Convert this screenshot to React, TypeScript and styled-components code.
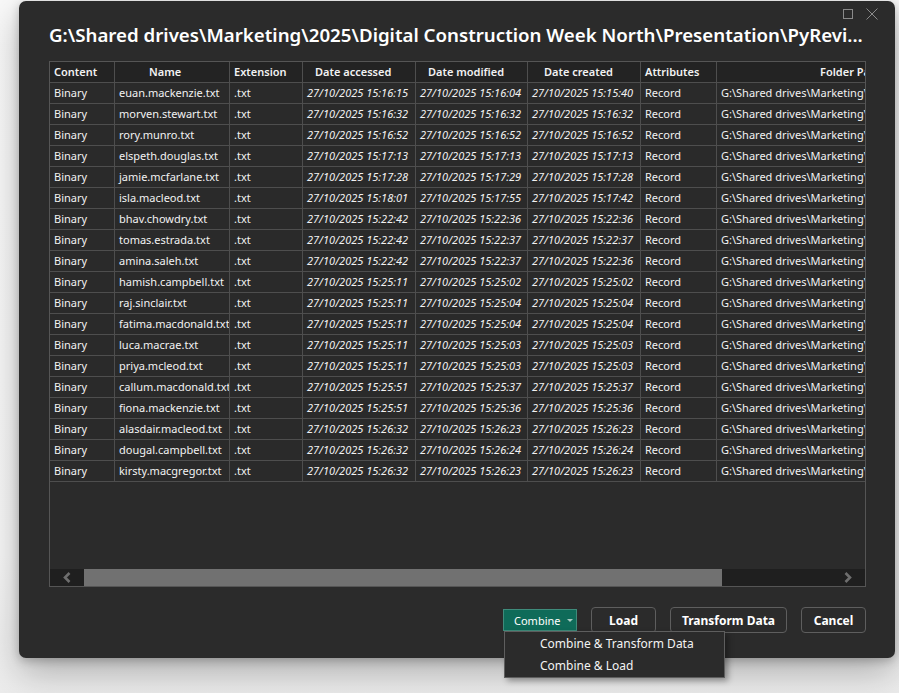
import styled, { createGlobalStyle } from "styled-components";

const GlobalStyle = createGlobalStyle`
  html, body {
    margin: 0;
    padding: 0;
    background: #f9f9f9;
    font-family: "Noto Sans", "Open Sans", sans-serif;
  }
`;

const Page = styled.div`
  width: 899px;
  height: 693px;
  padding: 1px 0 0 19px;
  box-sizing: border-box;
  overflow: hidden;
  background: linear-gradient(to bottom, #f9f9f9 0%, #f6f6f6 80%, #ececec 100%);
`;

const Dialog = styled.div`
  width: 876px;
  height: 657px;
  box-sizing: border-box;
  padding: 0 29px 25px 30px;
  background: #2b2b2b;
  border-radius: 7px;
  display: flex;
  flex-direction: column;
  box-shadow: 0 14px 36px rgba(0, 0, 0, 0.28), 0 3px 10px rgba(0, 0, 0, 0.22);
  color: #f3f3f3;
`;

const TopBar = styled.div`
  height: 20px;
  box-sizing: border-box;
  padding-top: 7px;
  margin-right: -12px;
  display: flex;
  justify-content: flex-end;
  gap: 12px;
`;

const WinButton = styled.span`
  width: 12px;
  height: 12px;
  display: flex;
  align-items: center;
  justify-content: center;
`;

const Title = styled.h1`
  margin: 0 0 12px;
  height: 28px;
  font-size: 18.7px;
  line-height: 28px;
  font-weight: 600;
  color: #ffffff;
  white-space: nowrap;
  overflow: hidden;
`;

const TableBox = styled.div`
  height: 526px;
  border: 1px solid #555555;
  box-sizing: border-box;
  display: flex;
  flex-direction: column;
  overflow: hidden;
`;

const GridArea = styled.div`
  flex: 1;
  overflow: hidden;
`;

const Row = styled.div<{ $head?: boolean }>`
  display: grid;
  grid-template-columns: 65px 115px 73px 113px 112px 113px 76px 320px;
  height: 21px;
  box-sizing: border-box;
  border-bottom: 1px solid #4e4e4e;
  background: ${(p) => (p.$head ? "#232323" : "#2a2a2a")};
`;

const Cell = styled.div<{ $italic?: boolean; $pad?: number; $bold?: boolean }>`
  box-sizing: border-box;
  border-right: 1px solid #4e4e4e;
  padding-left: ${(p) => p.$pad ?? 4}px;
  font-size: 11px;
  line-height: 20px;
  white-space: nowrap;
  overflow: hidden;
  font-style: ${(p) => (p.$italic ? "italic" : "normal")};
  font-weight: ${(p) => (p.$bold ? 600 : 400)};
  color: #f2f2f2;
`;

const ScrollBar = styled.div`
  height: 17px;
  display: flex;
  background: #1f1f1f;
`;

const ScrollButton = styled.div`
  width: 34px;
  display: flex;
  align-items: center;
  justify-content: center;
`;

const Track = styled.div`
  flex: 1;
  display: flex;
`;

const Thumb = styled.div`
  width: 638px;
  background: #717171;
`;

const Footer = styled.div`
  margin-top: 20px;
  height: 26px;
  display: flex;
  justify-content: flex-end;
  align-items: center;
  gap: 14px;
`;

const Button = styled.button<{ $w: number }>`
  width: ${(p) => p.$w}px;
  height: 26px;
  box-sizing: border-box;
  padding: 0;
  border: 1px solid #5e5e5e;
  border-radius: 4px;
  background: #2b2b2b;
  color: #ffffff;
  font-family: "Noto Sans", sans-serif;
  font-size: 12px;
  font-weight: 700;
`;

const SplitWrap = styled.div`
  position: relative;
`;

const CombineButton = styled.button`
  height: 22px;
  width: 74px;
  box-sizing: border-box;
  padding: 0 0 0 10px;
  display: flex;
  align-items: center;
  gap: 6px;
  border: 1px solid #3f8b7b;
  background: #0f6b59;
  color: #ffffff;
  font-family: "Noto Sans", sans-serif;
  font-size: 11px;
`;

const Caret = styled.span`
  width: 0;
  height: 0;
  border-left: 3px solid transparent;
  border-right: 3px solid transparent;
  border-top: 3px solid #a9cbc3;
`;

const Menu = styled.div`
  position: absolute;
  top: 22px;
  left: 1px;
  width: 221px;
  height: 47px;
  box-sizing: border-box;
  padding-top: 1px;
  background: #2b2b2b;
  border: 1px solid #5e5e5e;
  box-shadow: 3px 3px 6px rgba(0, 0, 0, 0.35);
  z-index: 2;
`;

const MenuItem = styled.div`
  height: 22px;
  line-height: 22px;
  padding-left: 35px;
  font-size: 12px;
  color: #f3f3f3;
  white-space: nowrap;
`;

const rows: [string, string, string, string][] = [
  ["euan.mackenzie.txt", "15:16:15", "15:16:04", "15:15:40"],
  ["morven.stewart.txt", "15:16:32", "15:16:32", "15:16:32"],
  ["rory.munro.txt", "15:16:52", "15:16:52", "15:16:52"],
  ["elspeth.douglas.txt", "15:17:13", "15:17:13", "15:17:13"],
  ["jamie.mcfarlane.txt", "15:17:28", "15:17:29", "15:17:28"],
  ["isla.macleod.txt", "15:18:01", "15:17:55", "15:17:42"],
  ["bhav.chowdry.txt", "15:22:42", "15:22:36", "15:22:36"],
  ["tomas.estrada.txt", "15:22:42", "15:22:37", "15:22:37"],
  ["amina.saleh.txt", "15:22:42", "15:22:37", "15:22:36"],
  ["hamish.campbell.txt", "15:25:11", "15:25:02", "15:25:02"],
  ["raj.sinclair.txt", "15:25:11", "15:25:04", "15:25:04"],
  ["fatima.macdonald.txt", "15:25:11", "15:25:04", "15:25:04"],
  ["luca.macrae.txt", "15:25:11", "15:25:03", "15:25:03"],
  ["priya.mcleod.txt", "15:25:11", "15:25:03", "15:25:03"],
  ["callum.macdonald.txt", "15:25:51", "15:25:37", "15:25:37"],
  ["fiona.mackenzie.txt", "15:25:51", "15:25:36", "15:25:36"],
  ["alasdair.macleod.txt", "15:26:32", "15:26:23", "15:26:23"],
  ["dougal.campbell.txt", "15:26:32", "15:26:24", "15:26:24"],
  ["kirsty.macgregor.txt", "15:26:32", "15:26:23", "15:26:23"],
];

const headers: [string, number][] = [
  ["Content", 4],
  ["Name", 34],
  ["Extension", 4],
  ["Date accessed", 12],
  ["Date modified", 12],
  ["Date created", 16],
  ["Attributes", 4],
  ["Folder Path", 103],
];

const folder =
  "G:\\Shared drives\\Marketing\\2025\\Digital Construction Week North\\Presentation";

function Chevron({ dir }: { dir: "left" | "right" }) {
  return (
    <svg width="8" height="11" viewBox="0 0 8 11">
      <polyline
        points={dir === "left" ? "6.5,1 2,5.5 6.5,10" : "1.5,1 6,5.5 1.5,10"}
        fill="none"
        stroke="#6e6e6e"
        strokeWidth="2.6"
      />
    </svg>
  );
}

export default function App() {
  const date = "27/10/2025 ";
  return (
    <Page>
      <GlobalStyle />
      <Dialog>
        <TopBar>
          <WinButton>
            <svg width="10" height="10" viewBox="0 0 10 10">
              <rect x="0.5" y="0.5" width="9" height="9" fill="none" stroke="#8a8a8a" />
            </svg>
          </WinButton>
          <WinButton>
            <svg width="12" height="12" viewBox="0 0 12 12">
              <path d="M0.5 0.5 L11.5 11.5 M11.5 0.5 L0.5 11.5" stroke="#8a8a8a" strokeWidth="1" />
            </svg>
          </WinButton>
        </TopBar>
        <Title>
          G:\Shared drives\Marketing\2025\Digital Construction Week North\Presentation\PyRevi...
        </Title>
        <TableBox>
          <GridArea>
            <Row $head>
              {headers.map(([h, pad]) => (
                <Cell key={h} $pad={pad} $bold>
                  {h}
                </Cell>
              ))}
            </Row>
            {rows.map(([name, a, m, c]) => (
              <Row key={name}>
                <Cell>Binary</Cell>
                <Cell>{name}</Cell>
                <Cell>.txt</Cell>
                <Cell $italic>{date + a}</Cell>
                <Cell $italic>{date + m}</Cell>
                <Cell $italic>{date + c}</Cell>
                <Cell>Record</Cell>
                <Cell>{folder}</Cell>
              </Row>
            ))}
          </GridArea>
          <ScrollBar>
            <ScrollButton>
              <Chevron dir="left" />
            </ScrollButton>
            <Track>
              <Thumb />
            </Track>
            <ScrollButton>
              <Chevron dir="right" />
            </ScrollButton>
          </ScrollBar>
        </TableBox>
        <Footer>
          <SplitWrap>
            <CombineButton>
              Combine
              <Caret />
            </CombineButton>
            <Menu>
              <MenuItem>Combine &amp; Transform Data</MenuItem>
              <MenuItem>Combine &amp; Load</MenuItem>
            </Menu>
          </SplitWrap>
          <Button $w={65}>Load</Button>
          <Button $w={117}>Transform Data</Button>
          <Button $w={65}>Cancel</Button>
        </Footer>
      </Dialog>
    </Page>
  );
}
